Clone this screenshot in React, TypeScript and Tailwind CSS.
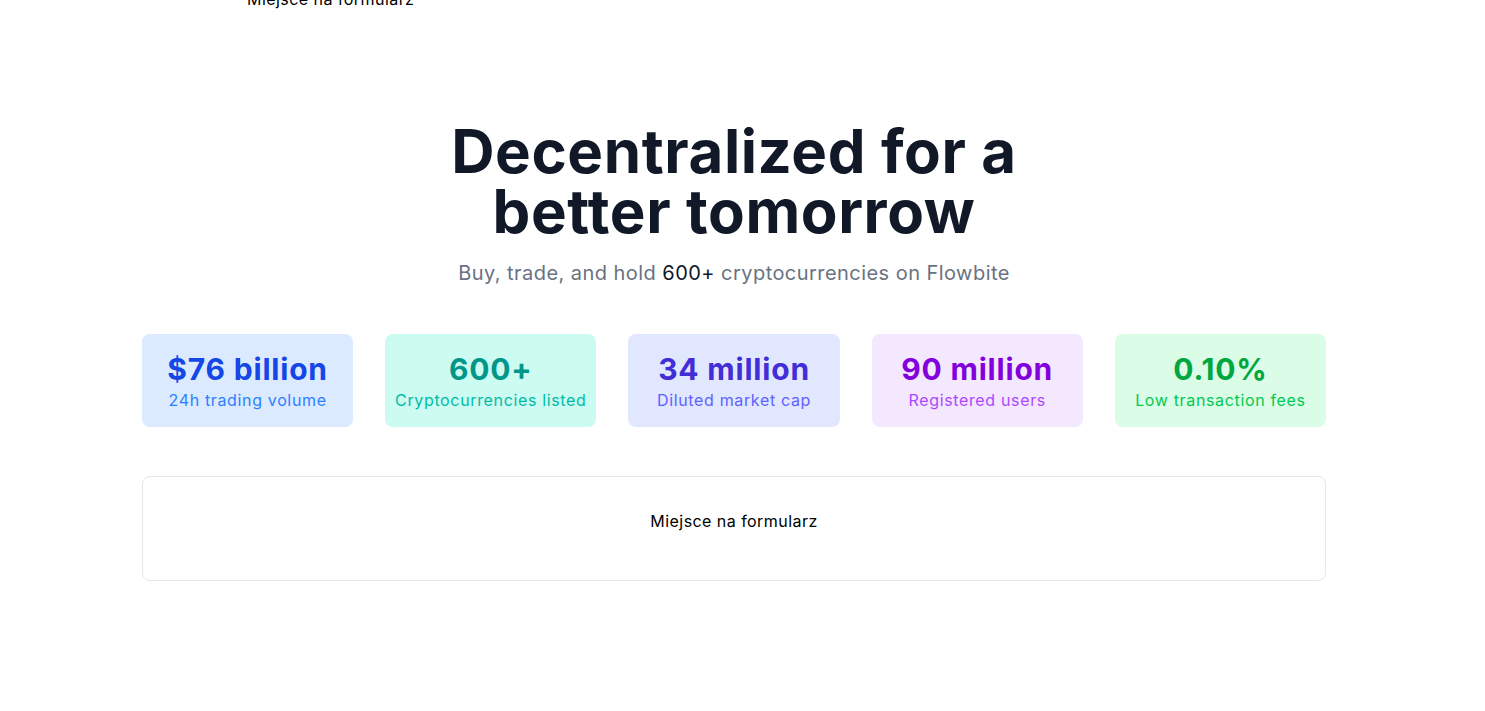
import React from "react";

const stats = [
  { value: "$76 billion", label: "24h trading volume", bg: "bg-blue-100", num: "text-blue-700", lab: "text-blue-500" },
  { value: "600+", label: "Cryptocurrencies listed", bg: "bg-teal-100", num: "text-teal-600", lab: "text-teal-500" },
  { value: "34 million", label: "Diluted market cap", bg: "bg-indigo-100", num: "text-indigo-700", lab: "text-indigo-500" },
  { value: "90 million", label: "Registered users", bg: "bg-purple-100", num: "text-purple-700", lab: "text-purple-500" },
  { value: "0.10%", label: "Low transaction fees", bg: "bg-green-100", num: "text-green-600", lab: "text-green-500" },
];

export default function App() {
  return (
    <div className="min-h-[711px] w-full overflow-hidden bg-white font-['Inter',sans-serif]">
      <div className="mr-[17px]">
        <div className="-mt-[13px] ml-[247px] text-base leading-6 tracking-[0.45px] text-black">Miejsce na formularz</div>
        <section className="mx-auto max-w-screen-xl px-12 pt-[110px] text-center">
          <h1 className="text-[60px] font-bold leading-[60px] tracking-[0.6px] text-[#111827]">
            Decentralized for a
            <br />
            better tomorrow
          </h1>
          <p className="mt-[18px] text-xl leading-7 tracking-[0.45px] text-gray-500">
            Buy, trade, and hold <span className="text-gray-900">600+</span> cryptocurrencies on Flowbite
          </p>
          <div className="mt-[47px] grid grid-cols-5 gap-8">
            {stats.map((s) => (
              <div key={s.value} className={`${s.bg} h-[93px] whitespace-nowrap rounded-lg px-2 pt-[17px]`}>
                <div className={`${s.num} text-3xl font-bold leading-9 tracking-[0.8px]`}>{s.value}</div>
                <div className={`${s.lab} mt-[1px] text-base leading-6 tracking-[0.65px]`}>{s.label}</div>
              </div>
            ))}
          </div>
          <div className="mt-[49px] h-[105px] rounded-lg border border-gray-200 pt-8 text-base leading-6 tracking-[0.45px] text-black">
            Miejsce na formularz
          </div>
        </section>
      </div>
    </div>
  );
}
